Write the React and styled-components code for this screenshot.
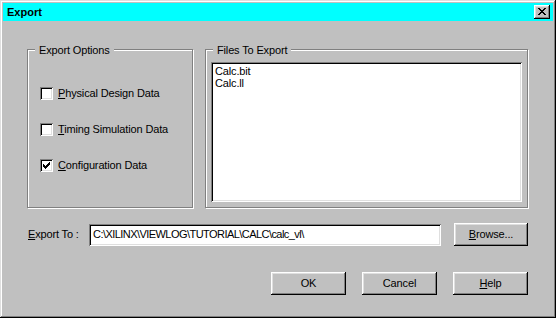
import styled, { createGlobalStyle } from 'styled-components';

const GlobalStyle = createGlobalStyle`
    html, body {
        margin: 0;
        padding: 0;
        background: #c0c0c0;
    }
    * {
        box-sizing: border-box;
    }
`;

const raised = `
    box-shadow:
        inset -1px -1px #000,
        inset 1px 1px #fff,
        inset -2px -2px #808080,
        inset 2px 2px #dfdfdf;
`;

const sunken = `
    box-shadow:
        inset 1px 1px #808080,
        inset -1px -1px #fff,
        inset 2px 2px #000,
        inset -2px -2px #dfdfdf;
`;

// 8x7 pixel close glyph, drawn as rects
const CLOSE_GLYPH = ['XX....XX', '.XX..XX.', '..XXXX..', '...XX...', '..XXXX..', '.XX..XX.', 'XX....XX'];

const CloseGlyph = () => (
    <svg width="8" height="7" viewBox="0 0 8 7" shapeRendering="crispEdges">
        {CLOSE_GLYPH.flatMap((row, y) =>
            row.split('').map((c, x) => (c === 'X' ? <rect key={`${x}-${y}`} x={x} y={y} width="1" height="1" fill="#000" /> : null))
        )}
    </svg>
);

const CheckGlyph = () => (
    <svg width="7" height="7" viewBox="0 0 7 7" shapeRendering="crispEdges">
        <path d="M0 2h1v3h-1z M1 3h1v3h-1z M2 4h1v3h-1z M3 3h1v3h-1z M4 2h1v3h-1z M5 1h1v3h-1z M6 0h1v3h-1z" fill="#000" />
    </svg>
);

const Checkbox = ({ label, accessKey, checked }) => (
    <CheckRow>
        <Box>{checked && <CheckGlyph />}</Box>
        <span>
            <u>{accessKey}</u>
            {label}
        </span>
    </CheckRow>
);

const App = () => (
    <>
        <GlobalStyle />
        <Window>
            <TitleBar>
                <Title>Export</Title>
                <CloseButton>
                    <CloseGlyph />
                </CloseButton>
            </TitleBar>
            <Content>
                <GroupRow>
                    <Group>
                        <GroupLabel>Export Options</GroupLabel>
                        <CheckList>
                            <Checkbox accessKey="P" label="hysical Design Data" />
                            <Checkbox accessKey="T" label="iming Simulation Data" />
                            <Checkbox accessKey="C" label="onfiguration Data" checked />
                        </CheckList>
                    </Group>
                    <Group $padded>
                        <GroupLabel>Files To Export</GroupLabel>
                        <ListBox>
                            <ListItem>Calc.bit</ListItem>
                            <ListItem>Calc.ll</ListItem>
                        </ListBox>
                    </Group>
                </GroupRow>
                <ExportRow>
                    <FieldLabel>
                        <u>E</u>xport To :
                    </FieldLabel>
                    <TextInput>C:\XILINX\VIEWLOG\TUTORIAL\CALC\calc_vl\</TextInput>
                    <Button $width={74}>
                        <u>B</u>rowse...
                    </Button>
                </ExportRow>
                <ButtonRow>
                    <Button>OK</Button>
                    <Button>Cancel</Button>
                    <Button>
                        <u>H</u>elp
                    </Button>
                </ButtonRow>
            </Content>
        </Window>
    </>
);

const Window = styled.div`
    width: 556px;
    height: 318px;
    padding: 3px;
    background: #c0c0c0;
    font-family: 'Liberation Sans', Arial, sans-serif;
    font-size: 11px;
    line-height: 13px;
    letter-spacing: -0.15px;
    color: #000;
    box-shadow:
        inset -1px -1px #000,
        inset 1px 1px #dfdfdf,
        inset -2px -2px #808080,
        inset 2px 2px #fff;
`;
const TitleBar = styled.div`
    height: 18px;
    display: flex;
    align-items: center;
    justify-content: space-between;
    padding: 0 3px 0 4px;
    background: #00ffff;
`;
const Title = styled.span`
    font-weight: bold;
    letter-spacing: 0;
`;
const CloseButton = styled.div`
    width: 16px;
    height: 14px;
    display: flex;
    align-items: center;
    justify-content: center;
    padding-bottom: 1px;
    background: #c0c0c0;
    ${raised}
`;
const Content = styled.div`
    padding: 28px 24px 0 24px;
    display: flex;
    flex-direction: column;
`;
const GroupRow = styled.div`
    display: grid;
    grid-template-columns: 166px 323px;
    column-gap: 12px;
    height: 159px;
`;
const Group = styled.div`
    position: relative;
    border: 1px solid #808080;
    box-shadow:
        inset 1px 1px #fff,
        1px 1px #fff;
    padding: ${({ $padded }) => ($padded ? '12px 5px 5px 5px' : '0')};
    display: flex;
    flex-direction: column;
`;
const GroupLabel = styled.span`
    position: absolute;
    top: -6px;
    left: 7px;
    padding: 0 4px;
    background: #c0c0c0;
`;
const CheckList = styled.div`
    display: flex;
    flex-direction: column;
    row-gap: 23px;
    padding: 37px 0 0 12px;
`;
const CheckRow = styled.div`
    display: flex;
    align-items: center;
    column-gap: 5px;
    height: 13px;
`;
const Box = styled.div`
    width: 13px;
    height: 13px;
    flex: none;
    display: flex;
    align-items: center;
    justify-content: center;
    background: #fff;
    ${sunken}
`;
const ListBox = styled.div`
    flex: 1;
    background: #fff;
    padding: 3px 4px;
    ${sunken}
`;
const ListItem = styled.div`
    height: 12px;
    line-height: 12px;
`;
const ExportRow = styled.div`
    display: flex;
    align-items: center;
    margin-top: 15px;
    height: 23px;
`;
const FieldLabel = styled.span`
    width: 62px;
    flex: none;
    padding-left: 1px;
`;
const TextInput = styled.div`
    width: 352px;
    height: 22px;
    margin-right: 13px;
    padding: 0 4px;
    display: flex;
    align-items: center;
    background: #fff;
    white-space: nowrap;
    letter-spacing: -0.55px;
    ${sunken}
`;
const Button = styled.div`
    width: ${({ $width }) => $width || 75}px;
    height: 23px;
    display: flex;
    align-items: center;
    justify-content: center;
    background: #c0c0c0;
    ${raised}
`;
const ButtonRow = styled.div`
    display: flex;
    justify-content: flex-end;
    column-gap: 16px;
    margin-top: 26px;
    padding-right: 1px;
`;

export default App;
